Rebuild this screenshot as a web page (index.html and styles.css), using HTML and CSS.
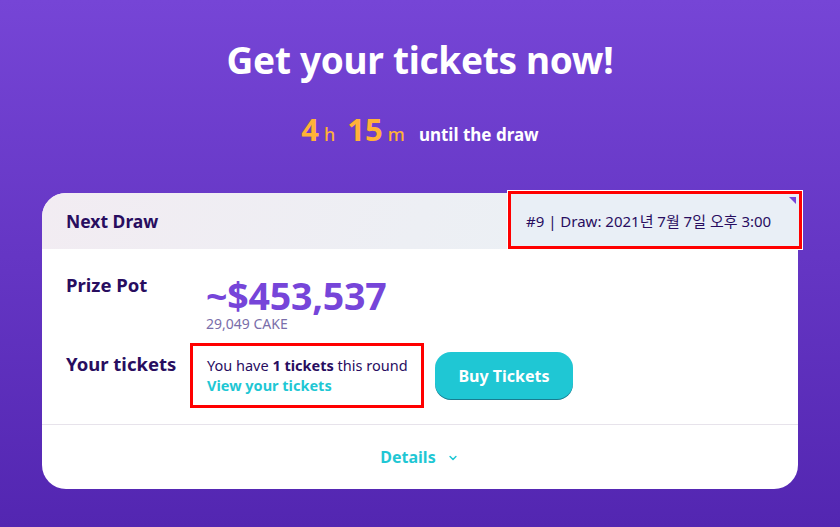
FILE: index.html
```html
<!DOCTYPE html>
<html>
<head>
<meta charset="utf-8">
<link rel="stylesheet" href="styles.css">
</head>
<body>
<main class="page">
  <h1 class="title">Get your tickets now!</h1>
  <div class="countdown">
    <span class="num">4</span><span class="unit">h</span>
    <span class="num">15</span><span class="unit">m</span>
    <span class="until">until the draw</span>
  </div>
  <section class="card">
    <header class="card-header">
      <h2 class="card-title">Next Draw</h2>
      <div class="draw-info">#9 | Draw: 2021년 7월 7일 오후 3:00</div>
    </header>
    <div class="card-body">
      <div class="label">Prize Pot</div>
      <div class="pot">
        <div class="pot-usd">~$453,537</div>
        <div class="pot-cake">29,049 CAKE</div>
      </div>
      <div class="label label-tickets">Your tickets</div>
      <div class="tickets-row">
        <div class="tickets-box">
          <div class="have">You have <b>1 tickets</b> this round</div>
          <a class="view-link">View your tickets</a>
        </div>
        <button class="buy-btn">Buy Tickets</button>
      </div>
    </div>
    <footer class="card-footer">
      <span class="details">Details</span>
      <svg class="chev" width="14" height="14" viewBox="0 0 24 24"><path d="M7 9.5l5 5 5-5" fill="none" stroke="#1FC7D4" stroke-width="2.6" stroke-linecap="round" stroke-linejoin="round"/></svg>
    </footer>
  </section>
</main>
</body>
</html>
```
FILE: styles.css
```css
* { box-sizing: border-box; }
html, body { margin: 0; padding: 0; }
body {
  width: 840px;
  height: 527px;
  overflow: hidden;
  background: linear-gradient(180deg, #7645D6 0%, #5326B1 100%);
  font-family: "Noto Sans", "Noto Sans CJK KR", sans-serif;
  color: #280D5F;
}
.page {
  display: flex;
  flex-direction: column;
  align-items: center;
  padding-top: 36px;
}
.title {
  margin: 0;
  color: #fff;
  font-size: 37px;
  line-height: 48px;
  font-weight: 700;
  letter-spacing: -0.3px;
}
.countdown {
  display: flex;
  align-items: baseline;
  margin-top: 25px;
  height: 40px;
}
.num {
  color: #FFB237;
  font-size: 31px;
  font-weight: 700;
  line-height: 40px;
}
.unit {
  color: #FFB237;
  font-size: 18px;
  font-weight: 500;
  margin-left: 5px;
  margin-right: 12px;
}
.until {
  color: #fff;
  font-size: 17px;
  font-weight: 700;
  margin-left: 2px;
}
.card {
  margin-top: 44px;
  width: 756px;
  background: #fff;
  border-radius: 24px;
  position: relative;
}
.card-header {
  height: 56px;
  display: flex;
  align-items: center;
  justify-content: space-between;
  padding: 0 24px;
  border-radius: 24px 24px 0 0;
  background: linear-gradient(111.68deg, #F2ECF2 0%, #E8F2F6 100%);
}
.card-title {
  margin: 0;
  font-size: 17.5px;
  font-weight: 700;
}
.draw-info {
  position: absolute;
  right: -4px;
  top: -2px;
  width: 294px;
  height: 58px;
  border: 3px solid #FF0000;
  outline: 1px solid #fff;
  background: #E9EFF6;
  font-size: 15px;
  display: flex;
  align-items: center;
  padding-left: 15px;
  color: #280D5F;
}
.draw-info::after {
  content: "";
  position: absolute;
  top: 3px;
  right: 3px;
  width: 0;
  height: 0;
  border-top: 7px solid #7645D9;
  border-left: 7px solid transparent;
}
.card-body {
  display: grid;
  grid-template-columns: 140px 1fr;
  padding: 23px 24px 16px;
  border-bottom: 1px solid #E7E3EB;
  row-gap: 11px;
}
.label {
  font-size: 18.5px;
  font-weight: 700;
  line-height: 25px;
}
.label-tickets { padding-top: 8px; }
.pot { padding-top: 4px; }
.pot-usd {
  color: #7645D9;
  font-size: 37.5px;
  font-weight: 700;
  line-height: 40px;
  letter-spacing: -0.2px;
}
.pot-cake {
  color: #7A6EAA;
  font-size: 14px;
  line-height: 16px;
}
.tickets-row {
  display: flex;
  align-items: center;
  margin-left: -16px;
}
.tickets-box {
  width: 234px;
  height: 65px;
  border: 3px solid #FF0000;
  padding: 9px 0 0 14px;
  font-size: 14.5px;
  line-height: 20px;
}
.view-link {
  display: block;
  color: #1FC7D4;
  font-weight: 700;
}
.buy-btn {
  margin-left: 11px;
  width: 138px;
  height: 48px;
  border: 0;
  border-radius: 16px;
  background: #1FC7D4;
  box-shadow: inset 0 -1px 0 0 rgba(14, 14, 44, 0.4);
  color: #fff;
  font-family: inherit;
  font-size: 16px;
  font-weight: 700;
}
.card-footer {
  height: 64px;
  display: flex;
  align-items: center;
  justify-content: center;
  gap: 10px;
}
.details {
  color: #1FC7D4;
  font-weight: 700;
  font-size: 16px;
}
.chev { margin-top: 1px; }
```
